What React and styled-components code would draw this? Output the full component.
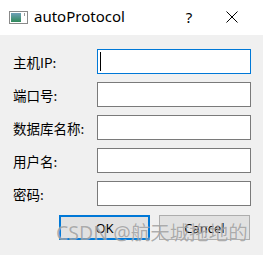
import React from 'react';
import styled, { createGlobalStyle } from 'styled-components';

const GlobalStyle = createGlobalStyle`
  html, body {
    margin: 0;
    padding: 0;
    background: #f0f0f0;
  }
  * {
    box-sizing: border-box;
  }
`;

const Window = styled.div`
  position: relative;
  width: 263px;
  height: 255px;
  background: #f0f0f0;
  font-family: "Noto Sans", "Noto Sans CJK SC", sans-serif;
  overflow: hidden;
`;

const TitleBar = styled.div`
  display: flex;
  align-items: center;
  height: 35px;
  background: #ffffff;
  padding-left: 9px;
`;

const TitleText = styled.span`
  margin-left: 6px;
  font-size: 15px;
  color: #000000;
  flex: 1;
  line-height: 1;
  margin-top: -2px;
`;

const TitleButton = styled.span`
  width: ${props => props.w}px;
  display: flex;
  align-items: center;
  justify-content: center;
  font-size: 15px;
  color: #000;
  margin-top: -2px;
`;

const Body = styled.div`
  padding: 14px 12px 0 13px;
`;

const Form = styled.div`
  display: grid;
  grid-template-columns: 84px 154px;
  row-gap: 8px;
`;

const Label = styled.label`
  display: flex;
  align-items: center;
  height: 25px;
  font-family: "Noto Sans CJK SC", sans-serif;
  font-size: 13.5px;
  color: #000;
`;

const Field = styled.div`
  position: relative;
  height: 25px;
  background: #ffffff;
  border: 1px solid ${props => (props.focused ? '#0078d7' : '#7a7a7a')};
`;

const Caret = styled.span`
  position: absolute;
  left: 2px;
  top: 2px;
  width: 1px;
  height: 19px;
  background: #000;
`;

const ButtonRow = styled.div`
  display: flex;
  justify-content: flex-end;
  gap: 9px;
  margin-top: 9px;
  padding-right: 1px;
`;

const Button = styled.button`
  width: 91px;
  height: 25px;
  padding: 0;
  background: #e1e1e1;
  border: ${props => (props.primary ? '2px solid #0078d7' : '1px solid #adadad')};
  font-family: "Noto Sans", sans-serif;
  font-size: 13px;
  color: #000;
`;

const Watermark = styled.div`
  position: absolute;
  left: 56px;
  top: 217px;
  font-family: "Noto Sans", "Noto Sans CJK SC", sans-serif;
  font-size: 19.5px;
  color: rgba(140, 140, 140, 0.7);
  text-shadow: 0 0 1px rgba(255, 255, 255, 0.6);
  white-space: nowrap;
  pointer-events: none;
`;

const AppIcon = () => (
  <svg width="19" height="13" viewBox="0 0 19 13">
    <defs>
      <linearGradient id="ig" x1="0" y1="0" x2="0" y2="1">
        <stop offset="0" stopColor="#6fa0b8" />
        <stop offset="1" stopColor="#2f8a5a" />
      </linearGradient>
    </defs>
    <rect x="0.5" y="0.5" width="18" height="12" fill="#ffffff" stroke="#8a8a8a" />
    <rect x="2" y="2" width="10" height="9" fill="url(#ig)" />
    <rect x="15" y="2" width="1" height="3" fill="#9a9a9a" />
  </svg>
);

const CloseIcon = () => (
  <svg width="12" height="12" viewBox="0 0 12 12">
    <path d="M0.5 0.5 L11.5 11.5 M11.5 0.5 L0.5 11.5" stroke="#000" strokeWidth="1" />
  </svg>
);

const fields = ['主机IP:', '端口号:', '数据库名称:', '用户名:', '密码:'];

const App = () => (
  <Window>
    <GlobalStyle />
    <TitleBar>
      <AppIcon />
      <TitleText>autoProtocol</TitleText>
      <TitleButton w={40}>?</TitleButton>
      <TitleButton w={46}>
        <CloseIcon />
      </TitleButton>
      <span style={{ width: 8 }} />
    </TitleBar>
    <Body>
      <Form>
        {fields.map((f, i) => (
          <React.Fragment key={f}>
            <Label>{f}</Label>
            <Field focused={i === 0}>{i === 0 && <Caret />}</Field>
          </React.Fragment>
        ))}
      </Form>
      <ButtonRow>
        <Button primary>OK</Button>
        <Button>Cancel</Button>
      </ButtonRow>
    </Body>
    <Watermark>CSDN @航天城拖地的</Watermark>
  </Window>
);

export default App;
